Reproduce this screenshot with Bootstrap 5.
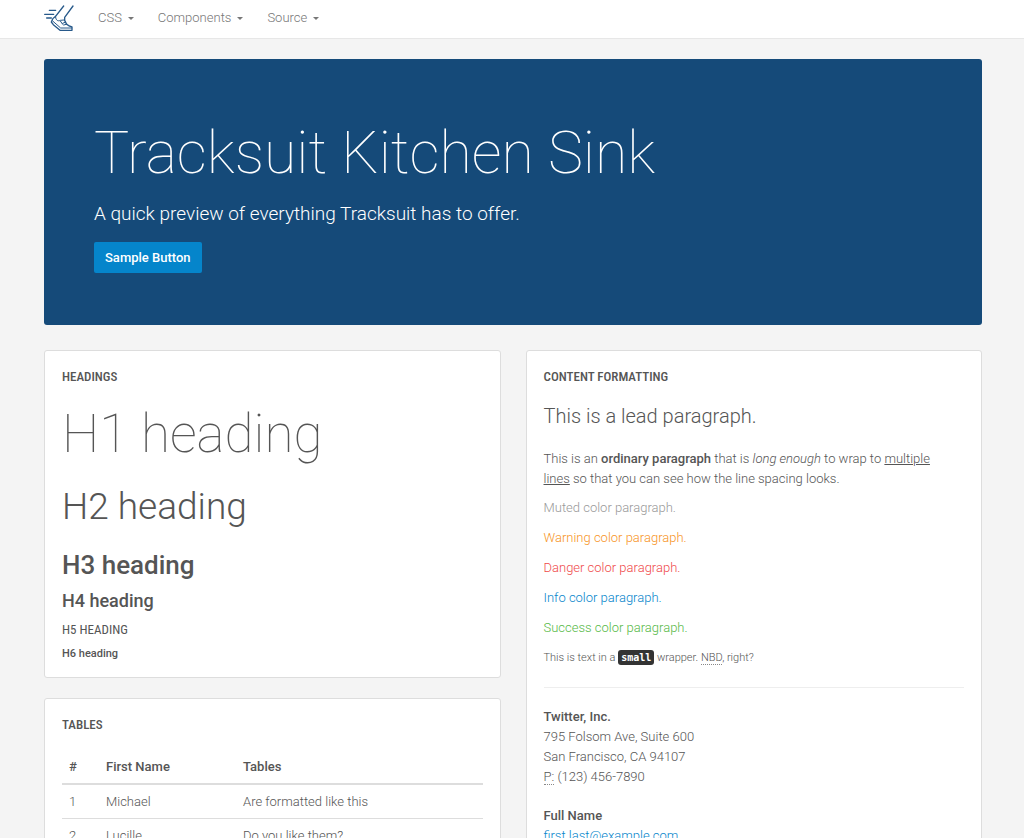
<!DOCTYPE html>
<html lang="en">
<head>
<meta charset="utf-8">
<meta name="viewport" content="width=device-width, initial-scale=1">
<title>Tracksuit Kitchen Sink</title>
<link href="https://cdn.jsdelivr.net/npm/bootstrap@5.3.0/dist/css/bootstrap.min.css" rel="stylesheet">
<style>
body { background: #f4f4f4; color: #555; font: 300 13px/20px Roboto, "Open Sans", sans-serif; overflow-x: hidden; }
.page-x { padding-left: 44px; padding-right: 42px; }
b, strong { font-weight: 500; }
a { color: #0585cb; text-decoration: none; }
p { margin-bottom: 10px; }

.topbar { background: #fff; border-bottom: 1px solid #e7e7e7; padding-top: 0; padding-bottom: 0; height: 39px; }
.topbar .navbar-brand { margin: 0 12px 0 0; padding: 0 0 2px; line-height: 0; }
.topbar .navbar-nav .nav-link { color: #777; padding: 8px 12px 10px; line-height: 20px; }
.topbar .dropdown-toggle::after { border-style: solid; border-width: 3px 3px 0; border-color: #777 transparent transparent; margin-left: 6px; vertical-align: 2px; }

.hero { background: #154a79; color: #fff; border-radius: 3px; margin-top: 20px; margin-bottom: 25px; padding: 60px 50px 52px; }
.hero h1 { font-size: 59px; font-weight: 100; line-height: 68px; margin-bottom: 13px; }
.hero-text { font-size: 19px; line-height: 28px; margin-bottom: 14px; }
.btn-sample { background: #0585cb; color: #fff; font-size: 13px; font-weight: 500; line-height: 19px; border: 0; border-radius: 2px; padding: 6px 11px; display: block; }
.btn-sample:hover { background: #0474b1; color: #fff; }

.panels { --bs-gutter-x: 25px; }
.panel { background: #fff; border: 1px solid #ddd; border-radius: 3px; padding: 18px 17px 16px; margin-bottom: 20px; color: inherit; }
.panel-title { font: 500 13px/16px "Roboto Condensed", Roboto, sans-serif; text-transform: uppercase; margin: 0; }
.h1-demo { font-size: 53px; line-height: 58px; font-weight: 100; margin: 20px 0 23px; }
.h2-demo { font-size: 37px; line-height: 42px; font-weight: 300; margin: 0 0 22px; }
.h3-demo { font-size: 26px; line-height: 30px; font-weight: 500; margin: 0 0 11px; }
.h4-demo { font-size: 18px; line-height: 20px; font-weight: 500; margin: 0 0 11px; }
.h5-demo { font: 400 13px/16px "Roboto Condensed", Roboto, sans-serif; text-transform: uppercase; margin: 0 0 9px; }
.h6-demo { font-size: 11px; line-height: 14px; font-weight: 500; margin: 0; }

.plain-table { margin: 17px 0 0; --bs-table-bg: transparent; }
.plain-table > :not(caption) > * > * { padding: 7px 7px 6px; border-bottom: 1px solid #ddd; color: #555; }
.plain-table > thead > tr > th { font-weight: 500; border-bottom: 2px solid #ddd; }
.plain-table .col-num { width: 37px; }
.plain-table .col-name { width: 137px; }

.lead-text { font-size: 20px; line-height: 28px; margin: 17px 0 19px; }
.copy { padding-right: 20px; margin-bottom: 9px; }
.c-muted { color: #999; }
.c-warning { color: #f7941e; }
.c-danger { color: #ef4a4a; }
.c-info { color: #0585cb; }
.c-success { color: #56b946; }
.small-text { font-size: 11px; margin-bottom: 19px; }
.small-text kbd { font: 700 10px/12px "DejaVu Sans Mono", monospace; color: #fff; background: #333; border-radius: 3px; padding: 2px 3px; }
abbr[title] { text-decoration: none; border-bottom: 1px dotted #888; }
.rule { border: 0; border-top: 1px solid #eee; opacity: 1; margin: 0 0 19px; }
address { line-height: 20px; margin-bottom: 19px; }
</style>
</head>
<body>
<nav class="navbar navbar-expand topbar page-x">
  <a class="navbar-brand" href="#" aria-label="Tracksuit">
    <svg width="30" height="28" viewBox="42 12 90 84" fill="none" stroke="#27598a" stroke-width="4" stroke-linecap="round" stroke-linejoin="round">
      <path d="M58 31H77M44 43H71M50 54H64"/>
      <path d="M101 18 79 46C76 51 71 52 68 57L64 66 70 74 90 91H126V81C120 80 115 78 110 73L104 61V52L129 18"/>
      <path d="M68 63 92 84H125" stroke-width="3"/>
      <path d="M77 52C77 60 84 65 91 61L102 60M91 63 98 73M98 70 105 67M101 75 109 73" stroke-width="3"/>
    </svg>
  </a>
  <ul class="navbar-nav">
    <li class="nav-item"><a class="nav-link dropdown-toggle" href="#">CSS</a></li>
    <li class="nav-item"><a class="nav-link dropdown-toggle" href="#">Components</a></li>
    <li class="nav-item"><a class="nav-link dropdown-toggle" href="#">Source</a></li>
  </ul>
</nav>

<main class="container-fluid page-x">
  <header class="hero">
    <h1>Tracksuit Kitchen Sink</h1>
    <p class="hero-text">A quick preview of everything Tracksuit has to offer.</p>
    <button type="button" class="btn btn-sample">Sample Button</button>
  </header>

  <div class="row panels">
    <div class="col-6">
      <section class="card panel">
        <h2 class="panel-title">Headings</h2>
        <h1 class="h1-demo">H1 heading</h1>
        <h2 class="h2-demo">H2 heading</h2>
        <h3 class="h3-demo">H3 heading</h3>
        <h4 class="h4-demo">H4 heading</h4>
        <h5 class="h5-demo">H5 heading</h5>
        <h6 class="h6-demo">H6 heading</h6>
      </section>
      <section class="card panel">
        <h2 class="panel-title">Tables</h2>
        <table class="table plain-table">
          <thead>
            <tr><th class="col-num" scope="col">#</th><th class="col-name" scope="col">First Name</th><th scope="col">Tables</th></tr>
          </thead>
          <tbody>
            <tr><td>1</td><td>Michael</td><td>Are formatted like this</td></tr>
            <tr><td>2</td><td>Lucille</td><td>Do you like them?</td></tr>
          </tbody>
        </table>
      </section>
    </div>
    <div class="col-6">
      <section class="card panel">
        <h2 class="panel-title">Content Formatting</h2>
        <p class="lead-text">This is a lead paragraph.</p>
        <p class="copy">This is an <strong>ordinary paragraph</strong> that is <em>long enough</em> to wrap to <u>multiple lines</u> so that you can see how the line spacing looks.</p>
        <p class="c-muted">Muted color paragraph.</p>
        <p class="c-warning">Warning color paragraph.</p>
        <p class="c-danger">Danger color paragraph.</p>
        <p class="c-info">Info color paragraph.</p>
        <p class="c-success">Success color paragraph.</p>
        <p class="small-text">This is text in a <kbd>small</kbd> wrapper. <abbr title="No Big Deal">NBD</abbr>, right?</p>
        <hr class="rule">
        <address>
          <strong>Twitter, Inc.</strong><br>
          795 Folsom Ave, Suite 600<br>
          San Francisco, CA 94107<br>
          <abbr title="Phone">P:</abbr> (123) 456-7890
        </address>
        <address>
          <strong>Full Name</strong><br>
          <a href="mailto:first.last@example.com">first.last@example.com</a>
        </address>
      </section>
    </div>
  </div>
</main>
<script src="https://cdn.jsdelivr.net/npm/bootstrap@5.3.0/dist/js/bootstrap.bundle.min.js"></script>
</body>
</html>
